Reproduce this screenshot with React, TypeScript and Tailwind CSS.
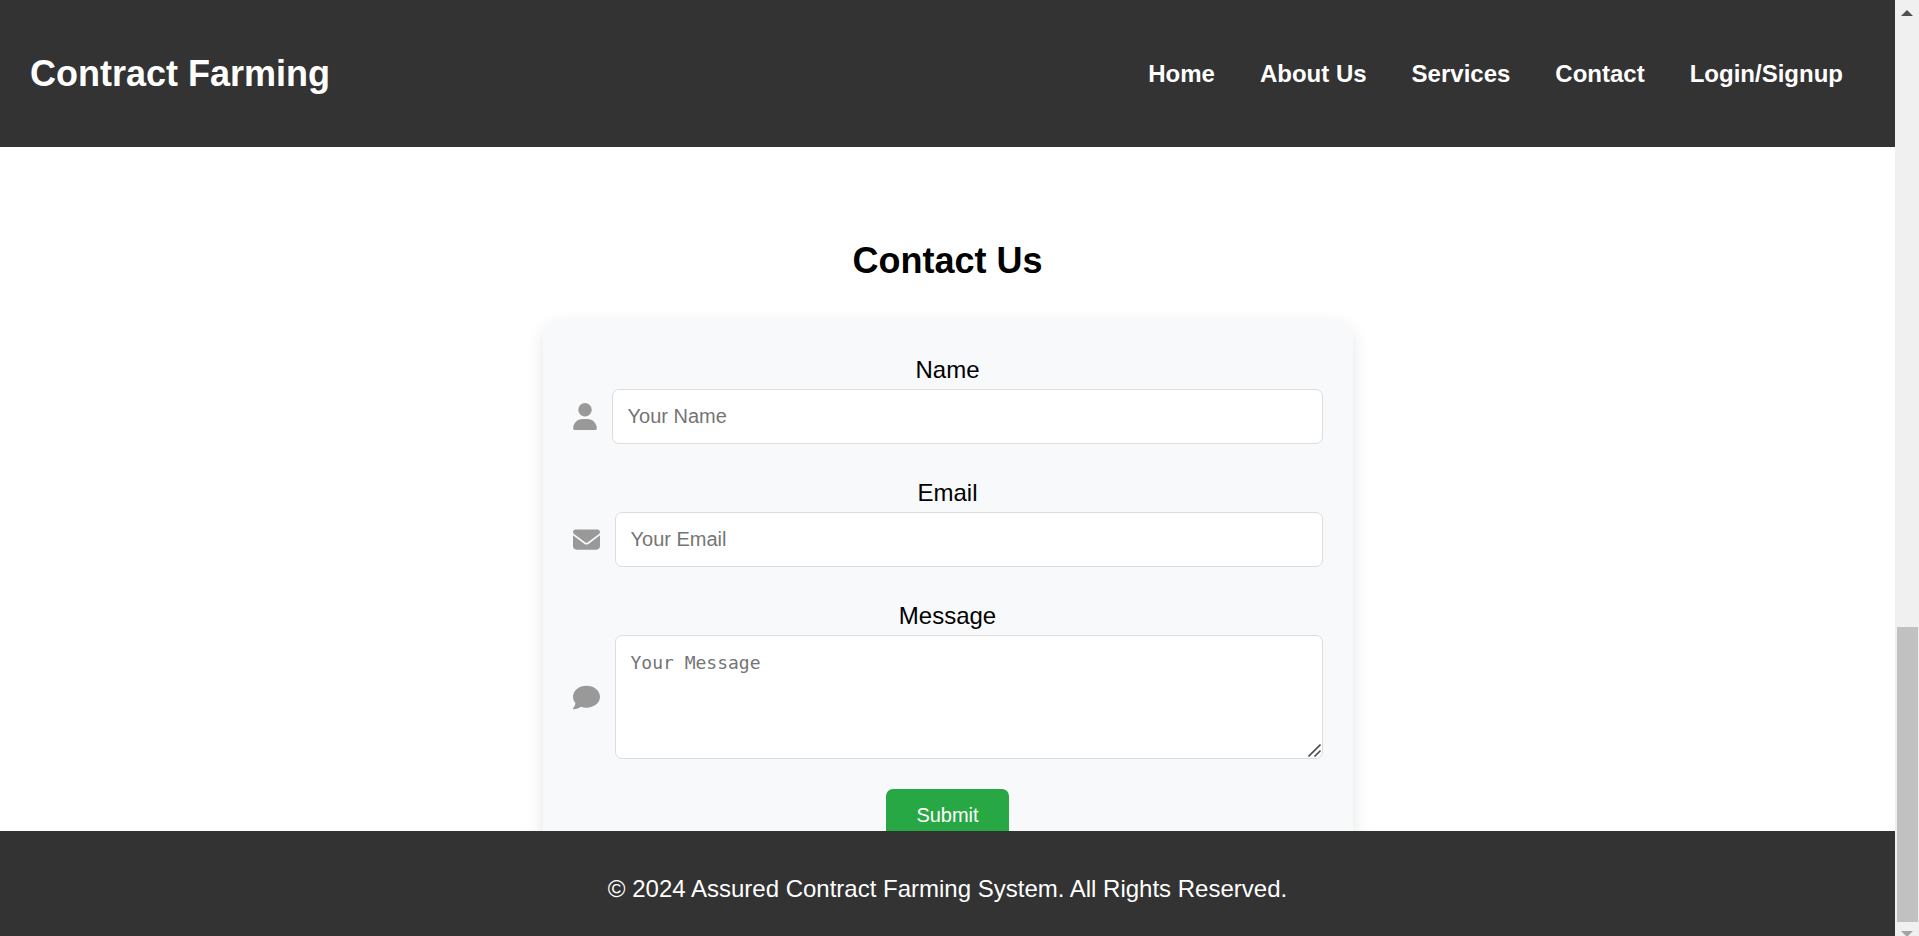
import type { ReactNode } from "react";
import { FaComment, FaEnvelope, FaUser } from "react-icons/fa6";

const navLinks = ["Home", "About Us", "Services", "Contact", "Login/Signup"];

const fieldClass =
  "min-w-0 flex-1 rounded-[7px] border border-[#dddddd] bg-white p-[15px] text-[20px] leading-[23px] text-black placeholder:text-[#757575]";

function Header() {
  return (
    <header className="z-10 flex shrink-0 items-center justify-between bg-[#333333] py-[45px] pr-[52px] pl-[30px] text-white">
      <h1 className="text-[36px] leading-[57px] font-bold">Contract Farming</h1>
      <nav>
        <ul className="flex gap-[45px] text-[24px] leading-[38px] font-bold">
          {navLinks.map((link) => (
            <li key={link}>
              <a href="#">{link}</a>
            </li>
          ))}
        </ul>
      </nav>
    </header>
  );
}

function Field({ id, label, icon, children }: { id: string; label: string; icon: ReactNode; children: ReactNode }) {
  return (
    <div className="mb-[30px]">
      <label htmlFor={id} className="block text-center text-[24px] leading-[38px] text-black">
        {label}
      </label>
      <div className="flex items-center gap-[15px] text-[#999999]">
        {icon}
        {children}
      </div>
    </div>
  );
}

function ContactForm() {
  return (
    <form
      className="mx-auto max-w-[810px] rounded-[15px] bg-[#f8f9fb] px-[30px] pt-[31px] pb-[30px] shadow-[0_6px_18px_rgba(0,0,0,0.1)]"
      onSubmit={(event) => event.preventDefault()}
    >
      <Field id="name" label="Name" icon={<FaUser className="h-[27px] w-[24px] shrink-0" />}>
        <input id="name" type="text" placeholder="Your Name" className={fieldClass} />
      </Field>
      <Field id="email" label="Email" icon={<FaEnvelope className="size-[27px] shrink-0" />}>
        <input id="email" type="email" placeholder="Your Email" className={fieldClass} />
      </Field>
      <Field id="message" label="Message" icon={<FaComment className="size-[27px] shrink-0" />}>
        <div className="relative flex min-w-0 flex-1">
          <textarea
            id="message"
            rows={4}
            placeholder="Your Message"
            className="w-full resize rounded-[7px] border border-[#dddddd] bg-white p-[15px] font-['DejaVu_Sans_Mono',monospace] text-[18px] leading-[23px] text-black placeholder:text-[#757575] [&::-webkit-resizer]:hidden"
          />
          <svg
            aria-hidden="true"
            viewBox="0 0 13 13"
            className="pointer-events-none absolute right-[2px] bottom-[2px] size-[13px]"
          >
            <path d="M0.5 12.5L12.5 0.5M6.5 12.5L12.5 6.5" stroke="#505050" strokeWidth="1.6" />
          </svg>
        </div>
      </Field>
      <button
        type="submit"
        className="mx-auto block rounded-[7px] bg-[#28a745] px-[30px] py-[15px] text-[20px] leading-[23px] text-white"
      >
        Submit
      </button>
    </form>
  );
}

function ScrollTrack() {
  return (
    <div aria-hidden="true" className="flex w-[24px] shrink-0 flex-col items-center overflow-hidden bg-[#f0f0f0]">
      <svg className="mt-[10px] h-[6px] w-[12px] shrink-0" viewBox="0 0 12 6">
        <path d="M6 0L12 6H0Z" fill="#505050" />
      </svg>
      <div className="grow-[611]" />
      <div className="w-[21px] grow-[295] bg-[#c1c1c1]" />
      <svg className="mt-[9px] h-[5px] w-[12px] shrink-0" viewBox="0 0 12 5">
        <path d="M0 0H12L7 5H5Z" fill="#a3a3a3" />
      </svg>
    </div>
  );
}

export default function App() {
  return (
    <div className="flex h-screen overflow-hidden bg-white font-['Liberation_Sans',Arial,sans-serif]">
      <div className="flex min-w-0 flex-1 flex-col">
        <Header />
        <main className="min-h-0 flex-1 overflow-hidden pt-[85px]">
          <h2 className="mb-[30px] text-center text-[36px] leading-[58px] font-bold text-black">Contact Us</h2>
          <ContactForm />
        </main>
        <footer className="shrink-0 bg-[#333333] pt-[39px] pb-[28px] text-center text-[24px] leading-[38px] text-white">
          <p>© 2024 Assured Contract Farming System. All Rights Reserved.</p>
        </footer>
      </div>
      <ScrollTrack />
    </div>
  );
}
